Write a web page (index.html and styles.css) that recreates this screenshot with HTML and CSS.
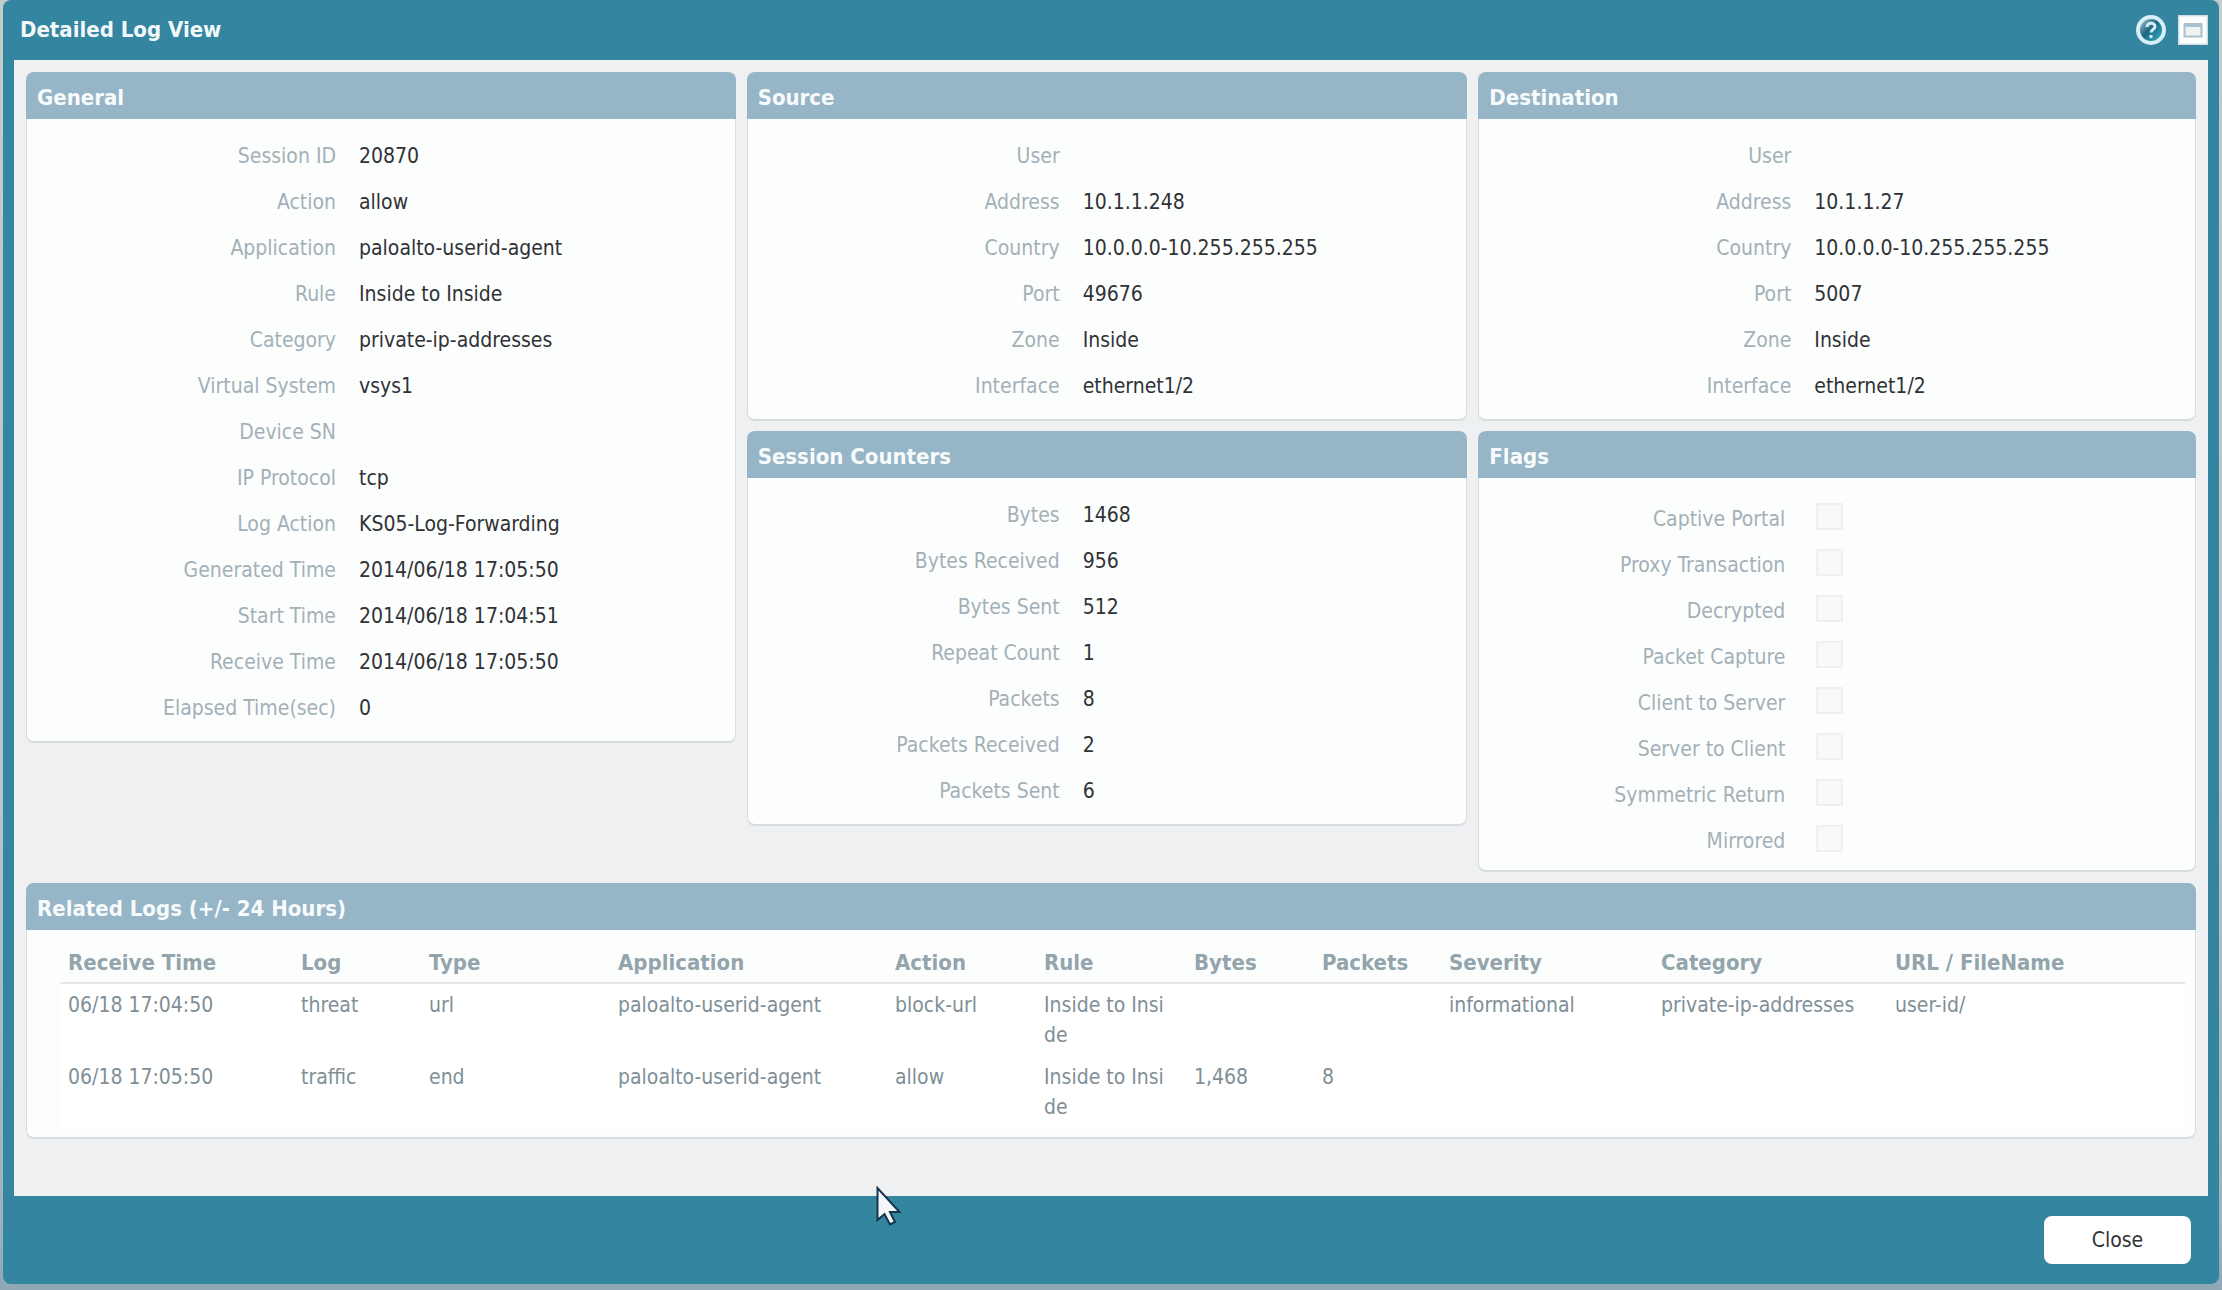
FILE: index.html
```html
<!DOCTYPE html>
<html lang="en">
<head>
<meta charset="utf-8">
<title>Detailed Log View</title>
<link rel="stylesheet" href="styles.css">
</head>
<body>
<main class="window">
  <header class="titlebar">
    <h1 class="title">Detailed Log View</h1>
    <div class="tools">
      <button class="tool" type="button" aria-label="Help">
        <svg width="32" height="32" viewBox="0 0 32 32" aria-hidden="true">
          <defs>
            <linearGradient id="orb" x1="0" y1="0" x2="1" y2="1">
              <stop offset="0" stop-color="#a9c6d3"/>
              <stop offset=".45" stop-color="#1c6682"/>
              <stop offset="1" stop-color="#35b3c6"/>
            </linearGradient>
          </defs>
          <circle cx="16" cy="16" r="15" fill="#d5eef7"/>
          <circle cx="16" cy="16" r="11" fill="url(#orb)"/>
          <path d="M12 13c0-5 8-5 8-.5 0 3-4 3-4 6" fill="none" stroke="#d3ecf4" stroke-width="3"/>
          <circle cx="16" cy="22.500" r="1.800" fill="#d3ecf4"/>
        </svg>
      </button>
      <button class="tool" type="button" aria-label="Maximize">
        <svg width="30" height="30" viewBox="0 0 30 30" aria-hidden="true">
          <rect width="30" height="30" fill="#d3dfe5"/>
          <rect x="1.500" y="1.500" width="27" height="27" fill="#fdfefe"/>
          <rect x="6.500" y="9.500" width="17" height="12" fill="#eff3f5" stroke="#a9c0cd" stroke-width="2"/>
          <path d="M6 10h18" stroke="#a9c0cd" stroke-width="4"/>
        </svg>
      </button>
    </div>
  </header>

  <div class="content">
    <div class="columns">
      <div class="column">
        <section class="panel">
          <h2 class="panel-title">General</h2>
          <dl class="fields fields-general">
            <dt>Session ID</dt><dd>20870</dd>
            <dt>Action</dt><dd>allow</dd>
            <dt>Application</dt><dd>paloalto-userid-agent</dd>
            <dt>Rule</dt><dd>Inside to Inside</dd>
            <dt>Category</dt><dd>private-ip-addresses</dd>
            <dt>Virtual System</dt><dd>vsys1</dd>
            <dt>Device SN</dt><dd></dd>
            <dt>IP Protocol</dt><dd>tcp</dd>
            <dt>Log Action</dt><dd>KS05-Log-Forwarding</dd>
            <dt>Generated Time</dt><dd>2014/06/18 17:05:50</dd>
            <dt>Start Time</dt><dd>2014/06/18 17:04:51</dd>
            <dt>Receive Time</dt><dd>2014/06/18 17:05:50</dd>
            <dt>Elapsed Time(sec)</dt><dd>0</dd>
          </dl>
        </section>
      </div>
      <div class="column">
        <section class="panel">
          <h2 class="panel-title">Source</h2>
          <dl class="fields">
            <dt>User</dt><dd></dd>
            <dt>Address</dt><dd>10.1.1.248</dd>
            <dt>Country</dt><dd>10.0.0.0-10.255.255.255</dd>
            <dt>Port</dt><dd>49676</dd>
            <dt>Zone</dt><dd>Inside</dd>
            <dt>Interface</dt><dd>ethernet1/2</dd>
          </dl>
        </section>
        <section class="panel">
          <h2 class="panel-title">Session Counters</h2>
          <dl class="fields">
            <dt>Bytes</dt><dd>1468</dd>
            <dt>Bytes Received</dt><dd>956</dd>
            <dt>Bytes Sent</dt><dd>512</dd>
            <dt>Repeat Count</dt><dd>1</dd>
            <dt>Packets</dt><dd>8</dd>
            <dt>Packets Received</dt><dd>2</dd>
            <dt>Packets Sent</dt><dd>6</dd>
          </dl>
        </section>
      </div>
      <div class="column">
        <section class="panel">
          <h2 class="panel-title">Destination</h2>
          <dl class="fields">
            <dt>User</dt><dd></dd>
            <dt>Address</dt><dd>10.1.1.27</dd>
            <dt>Country</dt><dd>10.0.0.0-10.255.255.255</dd>
            <dt>Port</dt><dd>5007</dd>
            <dt>Zone</dt><dd>Inside</dd>
            <dt>Interface</dt><dd>ethernet1/2</dd>
          </dl>
        </section>
        <section class="panel">
          <h2 class="panel-title">Flags</h2>
          <div class="flags">
            <label for="captive">Captive Portal</label><input class="check" type="checkbox" id="captive" disabled>
            <label for="proxy">Proxy Transaction</label><input class="check" type="checkbox" id="proxy" disabled>
            <label for="decrypted">Decrypted</label><input class="check" type="checkbox" id="decrypted" disabled>
            <label for="capture">Packet Capture</label><input class="check" type="checkbox" id="capture" disabled>
            <label for="c2s">Client to Server</label><input class="check" type="checkbox" id="c2s" disabled>
            <label for="s2c">Server to Client</label><input class="check" type="checkbox" id="s2c" disabled>
            <label for="symmetric">Symmetric Return</label><input class="check" type="checkbox" id="symmetric" disabled>
            <label for="mirrored">Mirrored</label><input class="check" type="checkbox" id="mirrored" disabled>
          </div>
        </section>
      </div>
    </div>

    <section class="panel">
      <h2 class="panel-title">Related Logs (+/- 24 Hours)</h2>
      <div class="table-wrap">
        <table class="logs">
          <colgroup>
            <col class="c-time"><col class="c-log"><col class="c-type"><col class="c-app"><col class="c-action"><col class="c-rule"><col class="c-bytes"><col class="c-packets"><col class="c-severity"><col class="c-category"><col class="c-url">
          </colgroup>
          <thead>
            <tr><th>Receive Time</th><th>Log</th><th>Type</th><th>Application</th><th>Action</th><th>Rule</th><th>Bytes</th><th>Packets</th><th>Severity</th><th>Category</th><th>URL / FileName</th></tr>
          </thead>
          <tbody>
            <tr><td>06/18 17:04:50</td><td>threat</td><td>url</td><td>paloalto-userid-agent</td><td>block-url</td><td class="wrap">Inside to Inside</td><td></td><td></td><td>informational</td><td>private-ip-addresses</td><td>user-id/</td></tr>
            <tr><td>06/18 17:05:50</td><td>traffic</td><td>end</td><td>paloalto-userid-agent</td><td>allow</td><td class="wrap">Inside to Inside</td><td>1,468</td><td>8</td><td></td><td></td><td></td></tr>
          </tbody>
        </table>
      </div>
    </section>
  </div>

  <footer class="footer">
    <button class="close" type="button">Close</button>
  </footer>

  <svg class="pointer" width="26" height="40" viewBox="0 0 26 40" aria-hidden="true">
    <path d="M1.500 2v32l7-6 5.500 10.500 5-2.500-5-10h9.500z" fill="#f6f7f9" stroke="#17344e" stroke-width="2"/>
  </svg>
</main>
</body>
</html>
```

FILE: styles.css
```css
* {
  box-sizing: border-box;
}

body {
  margin: 0;
  min-height: 100vh;
  display: flex;
  padding: 0 3px 6px;
  background: linear-gradient(#c3cbcb 0, #b9c6cc 60%, #9db2bd 95%, #8fa8b5 100%);
  font-family: "DejaVu Sans Condensed", "Noto Sans", sans-serif;
  font-size: 21px;
  line-height: 30px;
  color: #303236;
}

.window {
  position: relative;
  flex: 1;
  min-width: 0;
  display: flex;
  flex-direction: column;
  padding: 0 11px;
  border-radius: 8px;
  background: #3485a0;
}

.titlebar {
  height: 60px;
  display: flex;
  justify-content: space-between;
  align-items: center;
  padding-left: 6px;
}

.title {
  margin: 0;
  font-size: 22px;
  font-weight: bold;
  color: #f2f8fa;
}

.tools {
  display: flex;
  align-items: center;
  gap: 11px;
}

.tool {
  display: flex;
  padding: 0;
  border: 0;
  background: none;
}

.content {
  flex: 1;
  display: flex;
  flex-direction: column;
  gap: 11px;
  padding: 12px;
  background: #eff0f2;
}

.columns {
  display: grid;
  grid-template-columns: 710fr 721fr 718fr;
  align-items: start;
  gap: 11px;
}

.column {
  display: grid;
  gap: 10px;
}

.panel {
  border: 1px solid #d9dcdf;
  border-top: 0;
  border-bottom: 2px solid #d9dcdf;
  border-radius: 8px;
  background: #fcfefd;
}

.panel-title {
  margin: 0 -1px;
  padding: 11px 11px 6px;
  border-radius: 8px 8px 0 0;
  background: #96b5c6;
  color: #f8fbfc;
  font-size: 22px;
  font-weight: bold;
}

.fields,
.flags {
  display: grid;
  grid-template-columns: 312px 1fr;
  grid-auto-rows: 46px;
  align-items: center;
  column-gap: 23px;
  margin: 0;
  padding: 14px 0 10px;
}

.fields-general {
  grid-template-columns: 309px 1fr;
}

.fields dt,
.flags label {
  color: #a3b0b8;
  text-align: right;
}

.fields dd {
  margin: 0;
}

.flags {
  grid-template-columns: 306px 1fr;
  column-gap: 31px;
  padding: 18px 0 6px;
}

.check {
  appearance: none;
  width: 27px;
  height: 27px;
  margin: 0 0 6px;
  border: 2px solid #f0f0f2;
  background: #f9f9fb;
}

.table-wrap {
  padding: 8px 11px 9px 33px;
}

.logs {
  width: 100%;
  table-layout: fixed;
  border-collapse: collapse;
}

.logs th,
.logs td {
  padding: 6px 8px;
  text-align: left;
  vertical-align: top;
  white-space: nowrap;
}

.logs th {
  padding-top: 10px;
  padding-bottom: 4px;
  border-bottom: 2px solid #e6e8e8;
  color: #93a4ac;
  font-size: 22px;
}

.logs td {
  background: #fff;
  color: #808f97;
}

.logs .wrap {
  height: 72px;
  padding-right: 18px;
  white-space: normal;
  word-break: break-all;
}

.c-time { width: 233px; }
.c-log { width: 128px; }
.c-type { width: 189px; }
.c-app { width: 277px; }
.c-action { width: 149px; }
.c-rule { width: 150px; }
.c-bytes { width: 128px; }
.c-packets { width: 127px; }
.c-severity { width: 212px; }
.c-category { width: 234px; }
.c-url { width: 298px; }

.footer {
  height: 88px;
  display: flex;
  justify-content: flex-end;
  align-items: center;
  padding-right: 17px;
}

.close {
  width: 147px;
  height: 48px;
  border: 0;
  border-radius: 8px;
  background: #fff;
  color: #333;
  font: inherit;
}

/* Mouse pointer lying over the lower edge of the content */
.pointer {
  position: absolute;
  left: 873px;
  bottom: 58px;
}
```
